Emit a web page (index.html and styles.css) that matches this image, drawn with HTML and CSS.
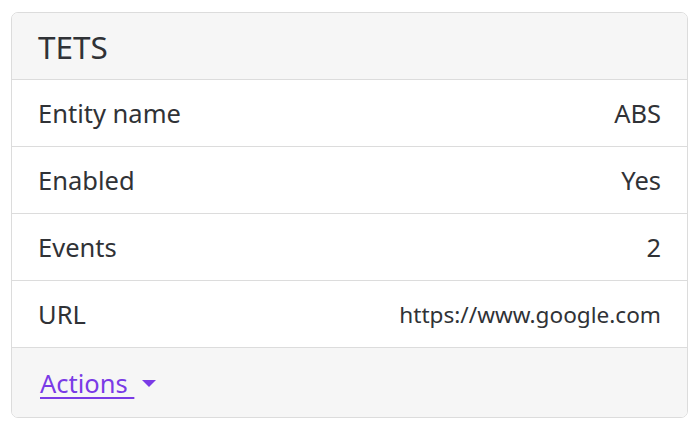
FILE: index.html
```html
<!DOCTYPE html>
<html>
<head>
<meta charset="utf-8">
<link rel="stylesheet" href="styles.css">
</head>
<body>
<div class="card">
  <div class="card-header">TETS</div>
  <div class="row"><span class="label">Entity name</span><span class="value">ABS</span></div>
  <div class="row"><span class="label">Enabled</span><span class="value">Yes</span></div>
  <div class="row"><span class="label">Events</span><span class="value">2</span></div>
  <div class="row"><span class="label">URL</span><span class="value url">https://www.google.com</span></div>
  <div class="card-footer">
    <a class="actions" href="#">Actions&nbsp;</a><span class="caret"></span>
  </div>
</div>
</body>
</html>
```
FILE: styles.css
```css
html, body {
  margin: 0;
  padding: 0;
  background: #fff;
}
body {
  padding: 12px 11px 0 11px;
  font-family: "Noto Sans", "Open Sans", sans-serif;
  color: #303236;
}
.card {
  width: 677px;
  box-sizing: border-box;
  border: 1px solid #dcdcdc;
  border-radius: 7px;
  overflow: hidden;
}
.card-header {
  background: #f6f6f6;
  height: 66px;
  display: flex;
  align-items: center;
  padding: 0 26px;
  font-size: 31.5px;
  border-bottom: 1px solid #dcdcdc;
}
.row {
  height: 66px;
  display: flex;
  align-items: center;
  justify-content: space-between;
  padding: 0 26px;
  font-size: 25.5px;
  border-bottom: 1px solid #dcdcdc;
  background: #fff;
}
.url {
  font-size: 22.6px;
}
.card-footer {
  background: #f6f6f6;
  height: 69px;
  display: flex;
  align-items: center;
  padding: 0 28px;
  font-size: 25.5px;
}
.actions {
  color: #7a3be6;
  text-decoration: underline;
  text-underline-offset: 4px;
  text-decoration-thickness: 2px;
}
.caret {
  display: inline-block;
  width: 0;
  height: 0;
  margin-left: 8px;
  margin-top: 2px;
  border-left: 7px solid transparent;
  border-right: 7px solid transparent;
  border-top: 7px solid #7a3be6;
}
```
